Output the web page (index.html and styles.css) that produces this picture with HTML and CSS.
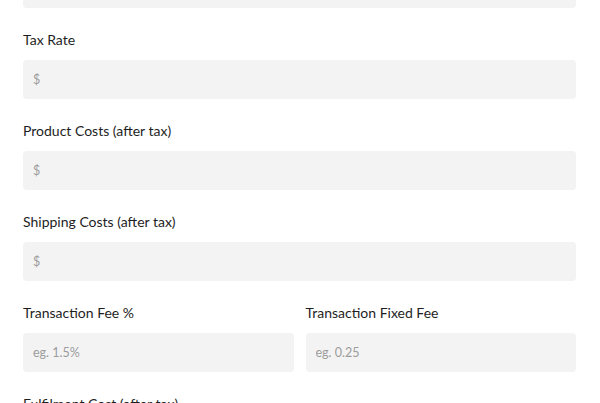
FILE: index.html
```html
<!DOCTYPE html>
<html lang="en">
<head>
    <meta charset="UTF-8">
    <meta name="viewport" content="width=device-width, initial-scale=1.0">
    <title>Profit Calculator</title>
    <link rel="stylesheet" href="styles.css">
</head>
<body>
    <form class="calc-form">
        <div class="field field-top">
            <input class="input" type="text">
        </div>
        <div class="field">
            <label class="label">Tax Rate</label>
            <input class="input" type="text" placeholder="$">
        </div>
        <div class="field">
            <label class="label">Product Costs (after tax)</label>
            <input class="input" type="text" placeholder="$">
        </div>
        <div class="field">
            <label class="label">Shipping Costs (after tax)</label>
            <input class="input" type="text" placeholder="$">
        </div>
        <div class="row">
            <div class="field">
                <label class="label">Transaction Fee %</label>
                <input class="input" type="text" placeholder="eg. 1.5%">
            </div>
            <div class="field">
                <label class="label">Transaction Fixed Fee</label>
                <input class="input" type="text" placeholder="eg. 0.25">
            </div>
        </div>
        <div class="field">
            <label class="label">Fulfilment Cost (after tax)</label>
            <input class="input" type="text" placeholder="$">
        </div>
    </form>
</body>
</html>
```

FILE: styles.css
```css
body {
    font-family: Lato, "Liberation Sans", sans-serif;
    margin: 0;
    background-color: #ffffff;
    color: #222222;
    overflow: hidden;
}
.calc-form {
    padding: 0 24px 0 23px;
    display: flex;
    flex-direction: column;
    gap: 22px;
}
.field {
    display: flex;
    flex-direction: column;
    gap: 10px;
    min-width: 0;
}
.field-top {
    margin-top: -31px;
}
.row {
    display: grid;
    grid-template-columns: 1fr 1fr;
    gap: 12px;
}
.label {
    font-size: 14px;
    line-height: 20px;
    color: #1e1e1e;
}
.input {
    height: 39px;
    box-sizing: border-box;
    border: none;
    border-radius: 4px;
    background-color: #f3f3f3;
    padding: 0 10px;
    font-family: inherit;
    font-size: 12.5px;
    color: #222222;
    outline: none;
    width: 100%;
}
.input::placeholder {
    color: #9c9c9c;
}
```
